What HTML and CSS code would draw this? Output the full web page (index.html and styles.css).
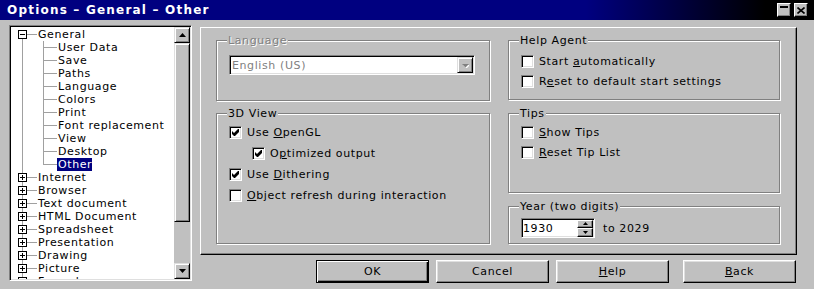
FILE: index.html
```html
<!DOCTYPE html>
<html lang="en">
<head>
    <meta charset="UTF-8">
    <title>Options - General - Other</title>
    <link rel="stylesheet" href="styles.css">
</head>
<body>

<div class="window">
    <!-- Title bar -->
    <div class="titlebar">
        <span class="title">Options – General – Other</span>
        <div class="title-btns">
            <span class="tbtn"><svg width="8" height="8" viewBox="0 0 8 8" shape-rendering="crispEdges"><rect x="0" y="0" width="8" height="2" fill="#000"/></svg></span>
            <span class="tbtn"><svg width="8" height="7" viewBox="0 0 8 7"><path d="M0.5 0.5l7 6M7.5 0.5l-7 6" stroke="#000" stroke-width="1.6"/></svg></span>
        </div>
    </div>

    <div class="content">
        <!-- Category tree -->
        <div class="tree">
            <div class="tree-list">
                <div class="row node first"><svg class="exp" width="9" height="9" viewBox="0 0 9 9" shape-rendering="crispEdges"><rect x=".5" y=".5" width="8" height="8" fill="#fff" stroke="#000"/><path d="M2 4.5h5" stroke="#000"/></svg><span class="label">General</span></div>
                <div class="row leaf"><span class="label">User Data</span></div>
                <div class="row leaf"><span class="label">Save</span></div>
                <div class="row leaf"><span class="label">Paths</span></div>
                <div class="row leaf"><span class="label">Language</span></div>
                <div class="row leaf"><span class="label">Colors</span></div>
                <div class="row leaf"><span class="label">Print</span></div>
                <div class="row leaf"><span class="label">Font replacement</span></div>
                <div class="row leaf"><span class="label">View</span></div>
                <div class="row leaf"><span class="label">Desktop</span></div>
                <div class="row leaf last"><span class="label selected">Other</span></div>
                <div class="row node"><svg class="exp" width="9" height="9" viewBox="0 0 9 9" shape-rendering="crispEdges"><rect x=".5" y=".5" width="8" height="8" fill="#fff" stroke="#000"/><path d="M2 4.5h5M4.5 2v5" stroke="#000"/></svg><span class="label">Internet</span></div>
                <div class="row node"><svg class="exp" width="9" height="9" viewBox="0 0 9 9" shape-rendering="crispEdges"><rect x=".5" y=".5" width="8" height="8" fill="#fff" stroke="#000"/><path d="M2 4.5h5M4.5 2v5" stroke="#000"/></svg><span class="label">Browser</span></div>
                <div class="row node"><svg class="exp" width="9" height="9" viewBox="0 0 9 9" shape-rendering="crispEdges"><rect x=".5" y=".5" width="8" height="8" fill="#fff" stroke="#000"/><path d="M2 4.5h5M4.5 2v5" stroke="#000"/></svg><span class="label">Text document</span></div>
                <div class="row node"><svg class="exp" width="9" height="9" viewBox="0 0 9 9" shape-rendering="crispEdges"><rect x=".5" y=".5" width="8" height="8" fill="#fff" stroke="#000"/><path d="M2 4.5h5M4.5 2v5" stroke="#000"/></svg><span class="label">HTML Document</span></div>
                <div class="row node"><svg class="exp" width="9" height="9" viewBox="0 0 9 9" shape-rendering="crispEdges"><rect x=".5" y=".5" width="8" height="8" fill="#fff" stroke="#000"/><path d="M2 4.5h5M4.5 2v5" stroke="#000"/></svg><span class="label">Spreadsheet</span></div>
                <div class="row node"><svg class="exp" width="9" height="9" viewBox="0 0 9 9" shape-rendering="crispEdges"><rect x=".5" y=".5" width="8" height="8" fill="#fff" stroke="#000"/><path d="M2 4.5h5M4.5 2v5" stroke="#000"/></svg><span class="label">Presentation</span></div>
                <div class="row node"><svg class="exp" width="9" height="9" viewBox="0 0 9 9" shape-rendering="crispEdges"><rect x=".5" y=".5" width="8" height="8" fill="#fff" stroke="#000"/><path d="M2 4.5h5M4.5 2v5" stroke="#000"/></svg><span class="label">Drawing</span></div>
                <div class="row node"><svg class="exp" width="9" height="9" viewBox="0 0 9 9" shape-rendering="crispEdges"><rect x=".5" y=".5" width="8" height="8" fill="#fff" stroke="#000"/><path d="M2 4.5h5M4.5 2v5" stroke="#000"/></svg><span class="label">Picture</span></div>
                <div class="row node"><svg class="exp" width="9" height="9" viewBox="0 0 9 9" shape-rendering="crispEdges"><rect x=".5" y=".5" width="8" height="8" fill="#fff" stroke="#000"/><path d="M2 4.5h5M4.5 2v5" stroke="#000"/></svg><span class="label">Formula</span></div>
            </div>
            <div class="vscroll">
                <span class="sbtn"><svg width="7" height="4" viewBox="0 0 7 4"><polygon points="0,4 7,4 3.5,0" fill="#000"/></svg></span>
                <span class="thumb"></span>
                <span class="track"></span>
                <span class="sbtn"><svg width="7" height="4" viewBox="0 0 7 4"><polygon points="0,0 7,0 3.5,4" fill="#000"/></svg></span>
            </div>
        </div>

        <div class="main">
            <!-- Tab page -->
            <div class="page">
                <div class="col col-left">
                    <div class="group lang">
                        <span class="legend disabled">Language</span>
                        <div class="combo">
                            <span class="combo-text">English (US)</span>
                            <span class="combo-btn"><svg width="7" height="5" viewBox="0 0 7 5"><polygon points="1,2 8,2 4.5,5.5" fill="#fff"/><polygon points="0,1 7,1 3.5,4.5" fill="#808080"/></svg></span>
                        </div>
                    </div>
                    <div class="group view3d">
                        <span class="legend">3D View</span>
                        <div class="check"><span class="box"><svg width="7" height="7" viewBox="0 0 7 7"><polygon points="0,2 2,4 6,0 7,0 7,3 3,7 2,7 0,5" fill="#000"/></svg></span><span>Use <u>O</u>penGL</span></div>
                        <div class="check sub"><span class="box"><svg width="7" height="7" viewBox="0 0 7 7"><polygon points="0,2 2,4 6,0 7,0 7,3 3,7 2,7 0,5" fill="#000"/></svg></span><span>O<u>p</u>timized output</span></div>
                        <div class="check"><span class="box"><svg width="7" height="7" viewBox="0 0 7 7"><polygon points="0,2 2,4 6,0 7,0 7,3 3,7 2,7 0,5" fill="#000"/></svg></span><span>Use <u>D</u>ithering</span></div>
                        <div class="check"><span class="box"></span><span><u>O</u>bject refresh during interaction</span></div>
                    </div>
                </div>
                <div class="col col-right">
                    <div class="group help">
                        <span class="legend">Help Agent</span>
                        <div class="check"><span class="box"></span><span>Start <u>a</u>utomatically</span></div>
                        <div class="check"><span class="box"></span><span>R<u>e</u>set to default start settings</span></div>
                    </div>
                    <div class="group tips">
                        <span class="legend">Tips</span>
                        <div class="check"><span class="box"></span><span><u>S</u>how Tips</span></div>
                        <div class="check"><span class="box"></span><span><u>R</u>eset Tip List</span></div>
                    </div>
                    <div class="group year">
                        <span class="legend">Year (two digits)</span>
                        <div class="year-row">
                            <div class="spin">
                                <span class="spin-text">1930</span>
                                <span class="spin-btns">
                                    <span class="spin-btn"><svg width="5" height="3" viewBox="0 0 5 3"><polygon points="0,3 5,3 2.5,0" fill="#000"/></svg></span>
                                    <span class="spin-btn"><svg width="5" height="3" viewBox="0 0 5 3"><polygon points="0,0 5,0 2.5,3" fill="#000"/></svg></span>
                                </span>
                            </div>
                            <span class="year-to">to 2029</span>
                        </div>
                    </div>
                </div>
            </div>

            <!-- Dialog buttons -->
            <div class="actions">
                <button class="btn default">OK</button>
                <button class="btn">Cancel</button>
                <button class="btn"><u>H</u>elp</button>
                <button class="btn back"><u>B</u>ack</button>
            </div>
        </div>
    </div>
</div>

</body>
</html>
```

FILE: styles.css
```css
* {
    box-sizing: border-box;
}

body {
    margin: 0;
    background-color: #c0c0c0;
    font-family: "DejaVu Sans", sans-serif;
    font-size: 11px;
    letter-spacing: 0.6px;
    color: #000;
}

.window {
    width: 814px;
    height: 289px;
    background-color: #c0c0c0;
    overflow: hidden;
}

/* title bar */
.titlebar {
    height: 20px;
    display: flex;
    align-items: center;
    justify-content: space-between;
    padding: 0 6px 0 7px;
    background: linear-gradient(to right, #000080 0%, #000080 72%, #000 94%);
    color: #fff;
}

.title {
    font-weight: bold;
    font-size: 12px;
    letter-spacing: 1.2px;
}

.title-btns {
    display: flex;
    gap: 3px;
}

.tbtn {
    width: 14px;
    height: 14px;
    display: flex;
    align-items: center;
    justify-content: center;
    background-color: #c0c0c0;
    border: 1px solid;
    border-color: #fff #000 #000 #fff;
    box-shadow: inset -1px -1px #808080;
}

.content {
    display: flex;
    gap: 8px;
    padding: 5px 0 0 9px;
}

/* tree */
.tree {
    width: 183px;
    height: 256px;
    display: flex;
    padding: 1px;
    background-color: #fff;
    border: 1px solid;
    border-color: #808080 #fff #fff #808080;
    box-shadow: inset 1px 1px #000, inset -1px -1px #dfdfdf;
}

.tree-list {
    flex: 1;
    overflow: hidden;
    padding-top: 1px;
    background-color: #fff;
}

.row {
    height: 13px;
    line-height: 13px;
    display: flex;
    align-items: center;
    white-space: nowrap;
}

.row .label {
    margin-left: 11px;
}

.exp {
    display: block;
    margin-left: 7px;
    flex: none;
}

.node {
    background:
        linear-gradient(#a0a0a0, #a0a0a0) 11px 0 / 1px 100% no-repeat,
        linear-gradient(#a0a0a0, #a0a0a0) 16px 6px / 10px 1px no-repeat;
}

.node.first {
    background:
        linear-gradient(#a0a0a0, #a0a0a0) 11px 6px / 1px 7px no-repeat,
        linear-gradient(#a0a0a0, #a0a0a0) 16px 6px / 10px 1px no-repeat;
}

.leaf {
    background:
        linear-gradient(#a0a0a0, #a0a0a0) 11px 0 / 1px 100% no-repeat,
        linear-gradient(#a0a0a0, #a0a0a0) 32px 0 / 1px 100% no-repeat,
        linear-gradient(#a0a0a0, #a0a0a0) 33px 6px / 13px 1px no-repeat;
}

.leaf.last {
    background:
        linear-gradient(#a0a0a0, #a0a0a0) 11px 0 / 1px 100% no-repeat,
        linear-gradient(#a0a0a0, #a0a0a0) 32px 0 / 1px 7px no-repeat,
        linear-gradient(#a0a0a0, #a0a0a0) 33px 6px / 13px 1px no-repeat;
}

.leaf .label {
    margin-left: 47px;
}

.leaf .label.selected {
    margin-left: 46px;
    padding: 0 0 0 1px;
    background-color: #000080;
    color: #fff;
}

.vscroll {
    width: 16px;
    display: flex;
    flex-direction: column;
    background-color: #c0c0c0;
}

.sbtn,
.thumb {
    background-color: #c0c0c0;
    border: 1px solid;
    border-color: #dfdfdf #000 #000 #dfdfdf;
    box-shadow: inset 1px 1px #fff, inset -1px -1px #808080;
}

.sbtn {
    height: 16px;
    display: flex;
    align-items: center;
    justify-content: center;
}

.thumb {
    height: 179px;
}

.track {
    flex: 1;
}

/* tab page */
.main {
    width: 597px;
    padding-top: 2px;
    display: flex;
    flex-direction: column;
}

.page {
    height: 228px;
    display: flex;
    gap: 18px;
    padding: 12px 0 0 15px;
    border: 1px solid;
    border-color: #fff #000 #000 #fff;
    box-shadow: inset -1px -1px #808080;
}

.col {
    display: flex;
    flex-direction: column;
}

.col-left {
    width: 274px;
    gap: 12px;
}

.col-right {
    width: 272px;
    gap: 13px;
}

.group {
    position: relative;
    padding-left: 12px;
    border: 1px solid #808080;
    box-shadow: inset 1px 1px #fff, 1px 1px #fff;
}

.legend {
    position: absolute;
    top: -7px;
    left: 10px;
    padding: 0 1px;
    line-height: 13px;
    background-color: #c0c0c0;
}

.legend.disabled {
    color: #808080;
    text-shadow: 1px 1px #fff;
}

.lang {
    height: 61px;
    padding-top: 14px;
}

.view3d {
    height: 131px;
    padding-top: 8px;
}

.help {
    height: 60px;
    padding-top: 10px;
}

.tips {
    height: 80px;
    padding-top: 8px;
}

.year {
    height: 38px;
    padding-top: 11px;
}

.check {
    height: 21px;
    display: flex;
    align-items: center;
    white-space: nowrap;
}

.help .check,
.tips .check {
    height: 20px;
}

.check.sub {
    margin-left: 23px;
}

.box {
    width: 13px;
    height: 13px;
    flex: none;
    display: flex;
    align-items: center;
    justify-content: center;
    margin-right: 5px;
    background-color: #fff;
    border: 1px solid;
    border-color: #808080 #fff #fff #808080;
    box-shadow: inset 1px 1px #000, inset -1px -1px #dfdfdf;
}

.combo,
.spin {
    display: flex;
    align-items: center;
    height: 20px;
    padding: 2px;
    background-color: #fff;
    border: 1px solid;
    border-color: #808080 #fff #fff #808080;
    box-shadow: inset 1px 1px #000, inset -1px -1px #dfdfdf;
}

.combo {
    width: 246px;
    color: #808080;
}

.combo-text {
    flex: 1;
}

.combo-btn {
    width: 16px;
    height: 16px;
    display: flex;
    align-items: center;
    justify-content: center;
    margin-right: -1px;
    background-color: #c0c0c0;
    border: 1px solid;
    border-color: #dfdfdf #000 #000 #dfdfdf;
    box-shadow: inset 1px 1px #fff, inset -1px -1px #808080;
}

.year-row {
    display: flex;
    align-items: center;
}

.spin {
    width: 74px;
    padding-left: 1px;
}

.spin-text {
    flex: 1;
}

.spin-btns {
    width: 16px;
    height: 17px;
    display: flex;
    flex-direction: column;
    margin-right: -1px;
}

.spin-btn {
    flex: 1;
    display: flex;
    align-items: center;
    justify-content: center;
    background-color: #c0c0c0;
    border: 1px solid;
    border-color: #fff #000 #000 #fff;
    box-shadow: inset -1px -1px #808080;
}

.year-to {
    margin-left: 8px;
}

/* dialog buttons */
.actions {
    display: flex;
    justify-content: flex-end;
    gap: 7px;
    margin-top: 5px;
    padding-right: 1px;
}

.btn {
    width: 113px;
    height: 23px;
    padding: 0;
    font: inherit;
    letter-spacing: inherit;
    color: #000;
    background-color: #c0c0c0;
    border: 1px solid;
    border-color: #fff #000 #000 #fff;
    box-shadow: inset -1px -1px #808080, inset 1px 1px #dfdfdf;
}

.btn.default {
    border-color: #000;
    box-shadow: inset 1px 1px #fff, inset -1px -1px #000, inset -2px -2px #808080;
}

.btn.back {
    margin-left: 7px;
}
```
